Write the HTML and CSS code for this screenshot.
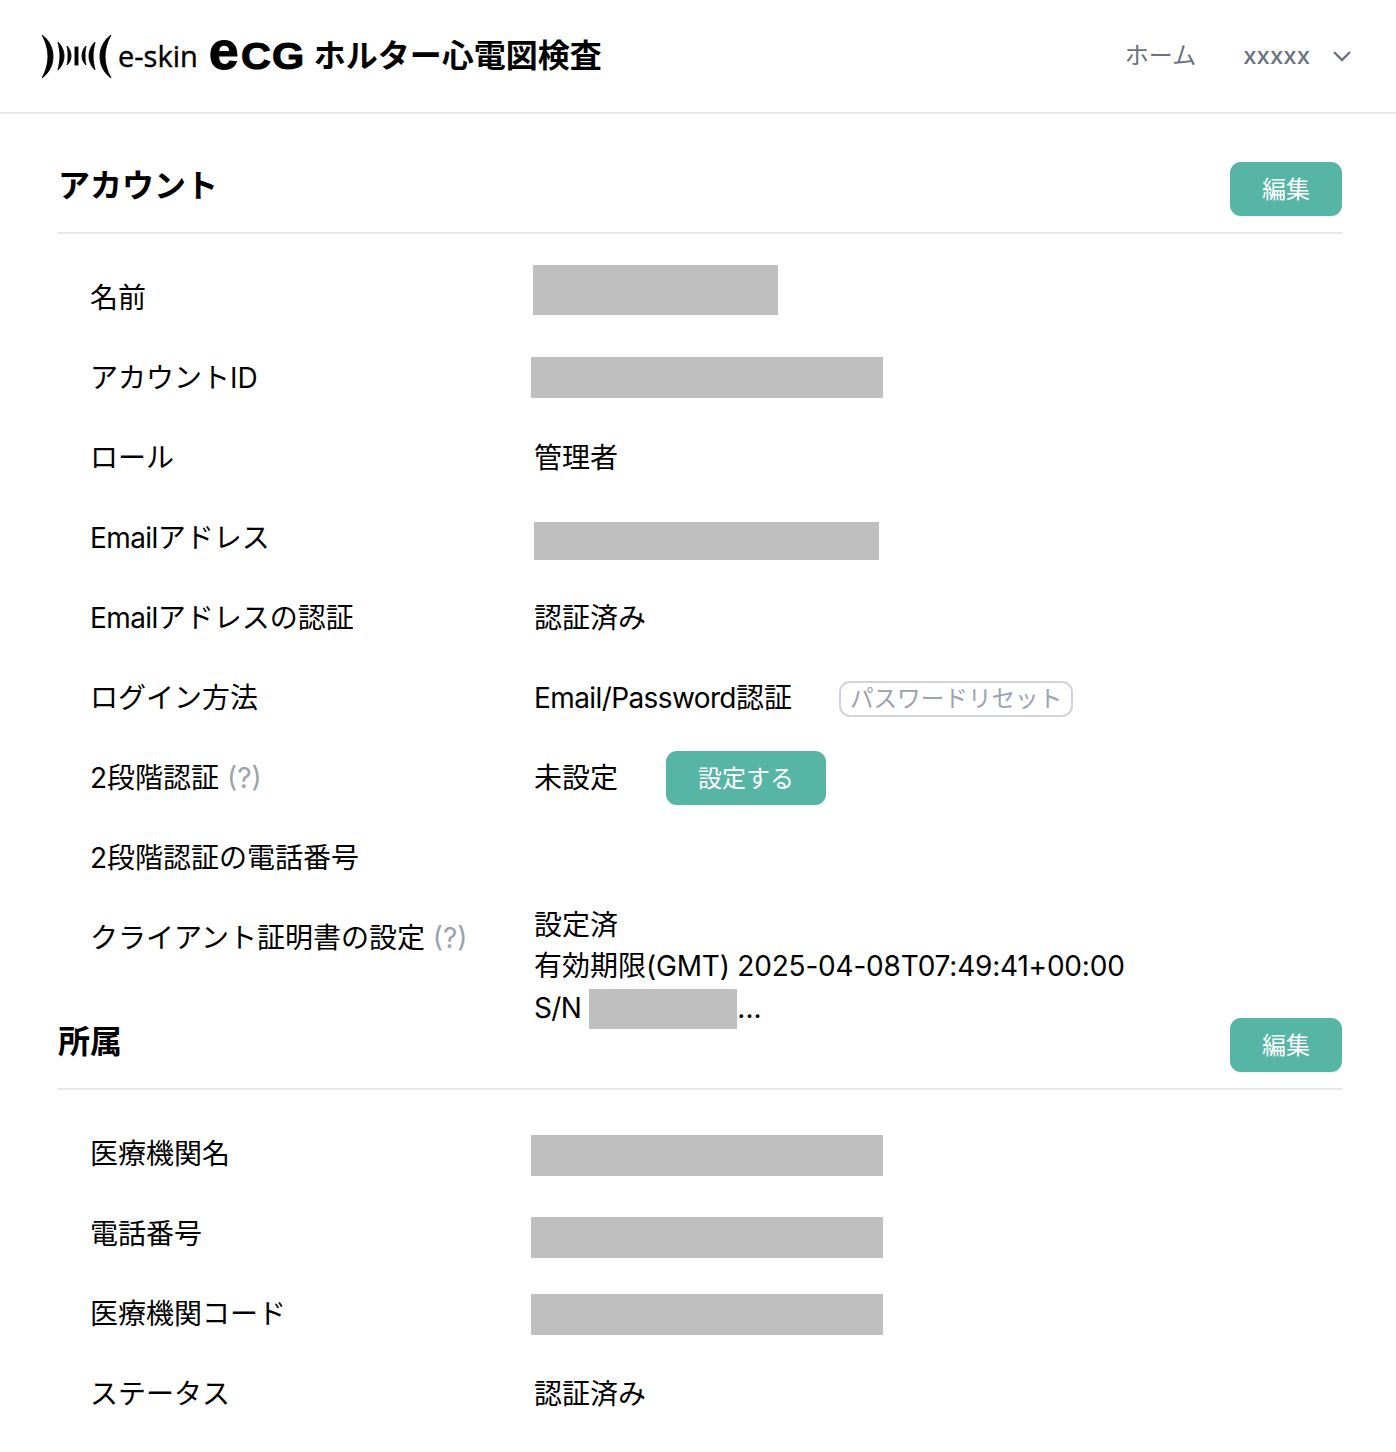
FILE: index.html
```html
<!DOCTYPE html>
<html lang="ja">
<head>
  <meta charset="UTF-8">
  <title>e-skin ECG ホルター心電図検査</title>
  <link rel="stylesheet" href="styles.css">
</head>
<body>
  <header class="topbar">
    <div class="brand">
      <svg class="brand-mark" width="70" height="46" viewBox="0 0 70 46">
        <path d="M0 2C8 8 11 16 11 23.5C11 31 8 39 0 45C4 38 6 30 6 23.5C6 17 4 9 0 2Z"/>
        <path d="M16 9C20 13 22 18 22 23C22 28 20 33 16 37C17 32 18 28 18 23C18 18 17 14 16 9Z"/>
        <path d="M25 13C28 16 29 20 29 23C29 26 28 29 25 32C26 29 26 26 26 23C26 20 26 17 25 13Z"/>
        <rect x="33" y="14" width="3" height="18"/>
        <path d="M44 13C41 16 40 20 40 23C40 26 41 29 44 32C43 29 43 26 43 23C43 20 43 17 44 13Z"/>
        <path d="M53 9C49 13 47 18 47 23C47 28 49 33 53 37C52 32 51 28 51 23C51 18 52 14 53 9Z"/>
        <path d="M69 2C61 8 58 16 58 23.5C58 31 61 39 69 45C65 38 63 30 63 23.5C63 17 65 9 69 2Z"/>
      </svg>
      <span class="brand-skin">e-skin</span>
      <span class="brand-ecg"><span class="brand-e">e</span><span class="brand-cg">CG</span></span>
      <span class="brand-title">ホルター心電図検査</span>
    </div>
    <nav class="topnav">
      <a class="nav-home">ホーム</a>
      <a class="nav-user">xxxxx</a>
      <svg class="nav-caret" width="20" height="12" viewBox="0 0 20 12">
        <path d="M2 2L10 10L18 2" fill="none" stroke="#6b7280" stroke-width="2.4"/>
      </svg>
    </nav>
  </header>

  <main class="content">
    <section class="panel">
      <div class="panel-head">
        <h2>アカウント</h2>
        <button class="btn">編集</button>
      </div>
      <div class="row">
        <div class="label">名前</div>
        <div class="value"><span class="redact redact-name"></span></div>
      </div>
      <div class="row">
        <div class="label">アカウントID</div>
        <div class="value"><span class="redact redact-wide"></span></div>
      </div>
      <div class="row">
        <div class="label">ロール</div>
        <div class="value">管理者</div>
      </div>
      <div class="row">
        <div class="label"><span class="latin">Email</span>アドレス</div>
        <div class="value"><span class="redact redact-mail"></span></div>
      </div>
      <div class="row">
        <div class="label"><span class="latin">Email</span>アドレスの認証</div>
        <div class="value">認証済み</div>
      </div>
      <div class="row">
        <div class="label">ログイン方法</div>
        <div class="value"><span class="latin">Email/Password</span>認証<button class="btn-reset">パスワードリセット</button></div>
      </div>
      <div class="row">
        <div class="label">2段階認証 <span class="help">(?)</span></div>
        <div class="value">未設定<button class="btn btn-setup">設定する</button></div>
      </div>
      <div class="row">
        <div class="label">2段階認証の電話番号</div>
        <div class="value"></div>
      </div>
      <div class="row row-cert">
        <div class="label">クライアント証明書の設定 <span class="help">(?)</span></div>
        <div class="value value-cert">
          <div>設定済</div>
          <div>有効期限<span class="digits">(GMT) 2025-04-08T07:49:41+00:00</span></div>
          <div class="serial"><span class="latin">S/N</span><span class="redact redact-serial"></span>...</div>
        </div>
      </div>
    </section>

    <section class="panel panel-org">
      <div class="panel-head">
        <h2>所属</h2>
        <button class="btn">編集</button>
      </div>
      <div class="row">
        <div class="label">医療機関名</div>
        <div class="value"><span class="redact redact-wide redact-org1"></span></div>
      </div>
      <div class="row">
        <div class="label">電話番号</div>
        <div class="value"><span class="redact redact-wide redact-org2"></span></div>
      </div>
      <div class="row">
        <div class="label">医療機関コード</div>
        <div class="value"><span class="redact redact-wide redact-org3"></span></div>
      </div>
      <div class="row">
        <div class="label">ステータス</div>
        <div class="value">認証済み</div>
      </div>
    </section>
  </main>
</body>
</html>
```

FILE: styles.css
```css
body {
  margin: 0;
  background-color: #fff;
  color: #000;
  font-family: Inter, "Noto Sans CJK JP", sans-serif;
  font-size: 28px;
  line-height: 40px;
}
.latin {
  letter-spacing: -0.6px;
}
.digits {
  letter-spacing: -0.2px;
}
.topbar {
  display: flex;
  justify-content: space-between;
  align-items: center;
  height: 112px;
  padding: 0 44px 0 42px;
  border-bottom: 2px solid #e5e7eb;
}
.brand {
  display: flex;
  align-items: center;
  color: #000;
}
.brand-mark {
  flex: none;
  fill: #000;
  stroke: #000;
  stroke-width: 0.9;
}
.brand-skin {
  margin-left: 6px;
  font-family: "Open Sans", sans-serif;
  font-size: 29px;
  -webkit-text-stroke: 0.4px #000;
}
.brand-ecg {
  display: flex;
  align-items: baseline;
  margin: 0 0 12px 11px;
  font-family: "Liberation Sans", sans-serif;
  font-weight: 700;
  -webkit-text-stroke: 1px #000;
}
.brand-e {
  font-size: 54px;
  line-height: 1;
}
.brand-cg {
  margin: 0 8px 0 2px;
  font-size: 36px;
  letter-spacing: 1px;
  transform: scaleX(1.15);
  transform-origin: left;
}
.brand-title {
  margin-left: 9px;
  font-size: 32px;
  font-weight: 700;
}
.topnav {
  display: flex;
  align-items: center;
  color: #6b7280;
  font-size: 24px;
}
.nav-home {
  margin-right: 47px;
}
.nav-user {
  margin-right: 22px;
  font-weight: 500;
}
.content {
  padding: 48px 54px 0 58px;
}
.panel-org {
  margin-top: 41px;
}
.panel-head {
  display: flex;
  justify-content: space-between;
  align-items: flex-start;
  height: 70px;
  margin-bottom: 23px;
  border-bottom: 2px solid #e5e7eb;
}
h2 {
  margin: 0;
  font-size: 32px;
  font-weight: 700;
  line-height: 48px;
  color: #000;
}
.btn {
  width: 112px;
  height: 54px;
  padding: 0 0 3px;
  border: none;
  border-radius: 11px;
  background-color: #57b5a5;
  box-shadow: 0 1px 2px rgba(0, 0, 0, 0.08);
  color: #fff;
  font-family: inherit;
  font-size: 24px;
}
.btn-setup {
  width: 160px;
  margin-left: 48px;
}
.btn-reset {
  height: 36px;
  margin: 2px 0 0 47px;
  padding: 0 9px;
  border: 2px solid #d1d5db;
  border-radius: 11px;
  background-color: #fff;
  color: #9ca3af;
  font-family: inherit;
  font-size: 23.6px;
  line-height: 28px;
}
.row {
  display: flex;
  align-items: center;
  height: 80px;
  padding-left: 32px;
}
.label {
  width: 444px;
  flex: none;
  padding-top: 2px;
}
.help {
  color: #9ca3af;
}
.value {
  display: flex;
  align-items: center;
  flex: 1;
  padding-top: 2px;
}
.value-cert {
  display: block;
  align-self: flex-start;
  padding-top: 8px;
  line-height: 41px;
}
.serial {
  display: flex;
  align-items: center;
}
.redact {
  display: block;
  flex: none;
  background-color: #bfbfbf;
}
.redact-name {
  width: 245px;
  height: 50px;
  margin: -16px 0 0 -1px;
}
.redact-wide {
  width: 352px;
  height: 41px;
  margin: -2px 0 0 -3px;
}
.redact-mail {
  width: 345px;
  height: 38px;
  margin-top: 6px;
}
.redact-serial {
  width: 148px;
  height: 40px;
  margin: 2px 0 0 8px;
}
.redact-org1 {
  margin-top: 2px;
}
.redact-org2 {
  margin-top: 6px;
}
.redact-org3 {
  margin-top: 1px;
}
```
